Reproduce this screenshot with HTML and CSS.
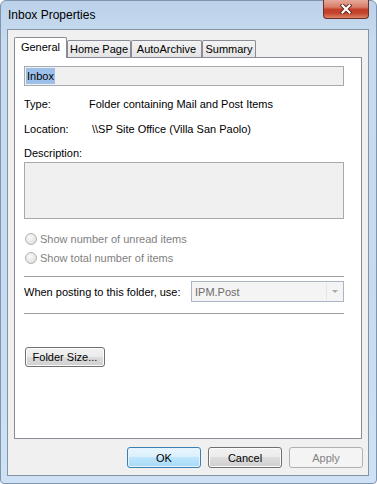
FILE: index.html
```html
<!DOCTYPE html>
<html lang="en">
<head>
    <meta charset="UTF-8">
    <meta name="viewport" content="width=device-width, initial-scale=1.0">
    <title>Inbox Properties</title>
    <link rel="stylesheet" href="styles.css">
</head>
<body>
    <div class="window">
        <div class="titlebar">
            <span class="title">Inbox Properties</span>
            <div class="close-btn">
                <svg width="12" height="10" viewBox="0 0 12 10">
                    <path d="M2.5 1.5 L9.5 8.5 M9.5 1.5 L2.5 8.5" stroke="#5a2218" stroke-width="4" stroke-linecap="square"/>
                    <path d="M2.5 1.5 L9.5 8.5 M9.5 1.5 L2.5 8.5" stroke="#ffffff" stroke-width="2.2" stroke-linecap="square"/>
                </svg>
            </div>
        </div>

        <div class="client">
            <div class="tabs">
                <div class="tab selected tab-general">General</div>
                <div class="tab tab-home">Home Page</div>
                <div class="tab tab-auto">AutoArchive</div>
                <div class="tab tab-summary">Summary</div>
            </div>

            <div class="panel">
                <div class="name-box"><span class="selection">Inbox</span></div>

                <div class="info-row row-type">
                    <span class="info-label">Type:</span>
                    <span>Folder containing Mail and Post Items</span>
                </div>
                <div class="info-row row-location">
                    <span class="info-label">Location:</span>
                    <span class="location-value">\\SP Site Office (Villa San Paolo)</span>
                </div>
                <div class="info-row row-desc">
                    <span>Description:</span>
                </div>
                <div class="desc-box"></div>

                <div class="radio-row radio-first">
                    <span class="radio"></span>
                    <span>Show number of unread items</span>
                </div>
                <div class="radio-row radio-second">
                    <span class="radio"></span>
                    <span>Show total number of items</span>
                </div>

                <div class="separator sep-first"></div>

                <div class="post-row">
                    <span>When posting to this folder, use:</span>
                    <div class="combo">
                        <span class="combo-text">IPM.Post</span>
                        <span class="combo-arrow"><span class="arrow"></span></span>
                    </div>
                </div>

                <div class="separator sep-second"></div>

                <button class="btn folder-size">Folder Size...</button>
            </div>

            <div class="footer">
                <button class="btn btn-default">OK</button>
                <button class="btn">Cancel</button>
                <button class="btn btn-disabled">Apply</button>
            </div>
        </div>
    </div>
</body>
</html>
```

FILE: styles.css
```css
body {
    margin: 0;
    font-family: "Liberation Sans", Arial, sans-serif;
    font-size: 11px;
    color: #000;
    overflow: hidden;
}
.window {
    width: 377px;
    height: 484px;
    box-sizing: border-box;
    display: flex;
    flex-direction: column;
    padding: 0 7px 7px 6px;
    background: linear-gradient(to bottom, #bcd2ea 0, #c8dbef 40px, #c6dbf1 60%, #cfe2f5 100%);
    border: 1px solid #7f95ad;
    border-radius: 6px 6px 4px 4px;
}
.titlebar {
    height: 28px;
    display: flex;
    align-items: center;
}
.title {
    padding-left: 1px;
    font-size: 12px;
}
.close-btn {
    margin-left: auto;
    align-self: flex-start;
    margin-top: -1px;
    width: 46px;
    height: 19px;
    box-sizing: border-box;
    border: 1px solid #6e3127;
    border-top: none;
    border-radius: 0 0 4px 4px;
    background: linear-gradient(to bottom, #e6a999 0%, #d77c68 40%, #c3412a 52%, #c2432b 72%, #dd8466 100%);
    display: flex;
    justify-content: center;
    align-items: center;
}
.client {
    flex: 1;
    display: flex;
    flex-direction: column;
    background: #f0f0f0;
    border: 1px solid #8593a3;
    padding: 7px 6px 0 6px;
}
.tabs {
    display: flex;
    align-items: flex-end;
    height: 20px;
}
.tab {
    box-sizing: border-box;
    height: 17px;
    border: 1px solid #898c95;
    border-bottom: none;
    border-radius: 2px 2px 0 0;
    background: linear-gradient(to bottom, #f3f3f3, #e4e4e4);
    display: flex;
    justify-content: center;
    align-items: center;
    white-space: nowrap;
}
.tab.selected {
    height: 21px;
    margin-bottom: -1px;
    background: #fff;
    position: relative;
    z-index: 1;
    padding-bottom: 2px;
}
.tab-general { width: 53px; }
.tab-home { width: 64px; }
.tab-auto { width: 71px; }
.tab-summary { width: 54px; }
.panel {
    flex: 1;
    background: #fff;
    border: 1px solid #898c95;
    padding: 8px 17px 0 9px;
    display: flex;
    flex-direction: column;
    align-items: flex-start;
}
.name-box {
    box-sizing: border-box;
    width: 320px;
    height: 20px;
    border: 1px solid #a5a9b0;
    background: #f0f0f0;
    padding-left: 1px;
    display: flex;
    align-items: center;
}
.selection {
    background: #9dc0ea;
    padding: 0 1px;
    line-height: 16px;
}
.info-row {
    height: 15px;
    display: flex;
    align-items: center;
    margin-top: 10px;
}
.info-label {
    width: 65px;
}
.location-value {
    padding-left: 3px;
}
.row-desc {
    margin-top: 9px;
}
.desc-box {
    box-sizing: border-box;
    width: 320px;
    height: 57px;
    margin-top: 2px;
    border: 1px solid #a5a9b0;
    background: #f0f0f0;
}
.radio-row {
    height: 17px;
    display: flex;
    align-items: center;
    color: #7f7f7f;
}
.radio-first { margin-top: 11px; }
.radio-second { margin-top: 2px; }
.radio {
    box-sizing: border-box;
    width: 12px;
    height: 12px;
    margin: 0 3px 0 1px;
    border: 1px solid #b4b4b4;
    border-radius: 50%;
    background: radial-gradient(circle at 40% 35%, #fafafa 0, #e6e6e6 60%, #d6d6d6 100%);
}
.separator {
    width: 320px;
    height: 1px;
    background: #a0a0a0;
}
.sep-first { margin-top: 10px; }
.sep-second { margin-top: 11px; }
.post-row {
    width: 320px;
    height: 21px;
    margin-top: 4px;
    display: flex;
    align-items: center;
}
.combo {
    margin-left: auto;
    box-sizing: border-box;
    width: 153px;
    height: 21px;
    border: 1px solid #a7b5c6;
    background: #f4f4f4;
    display: flex;
    align-items: center;
}
.combo-text {
    padding-left: 3px;
    color: #6d6d6d;
}
.combo-arrow {
    margin-left: auto;
    width: 15px;
    height: 17px;
    margin-right: 1px;
    border-left: 1px solid #e2e5e9;
    display: flex;
    justify-content: center;
    align-items: center;
}
.arrow {
    width: 0;
    height: 0;
    border-left: 3px solid transparent;
    border-right: 3px solid transparent;
    border-top: 3px solid #a2a8af;
}
.btn {
    box-sizing: border-box;
    width: 74px;
    height: 21px;
    padding: 0;
    border: 1px solid #707070;
    border-radius: 3px;
    background: linear-gradient(to bottom, #f2f2f2 0%, #ebebeb 50%, #dddddd 50%, #cfcfcf 100%);
    box-shadow: inset 0 0 0 1px #fbfbfb;
    font-family: "Liberation Sans", Arial, sans-serif;
    font-size: 11px;
    color: #000;
}
.folder-size {
    width: 80px;
    height: 20px;
    margin: 33px 0 0 1px;
}
.footer {
    height: 36px;
    box-sizing: border-box;
    padding-top: 8px;
    margin-right: -1px;
    display: flex;
    justify-content: flex-end;
    align-items: flex-start;
    gap: 7px;
}
.btn-default {
    border-color: #3c7fb1;
    background: linear-gradient(to bottom, #eaf6fd 0%, #d9f0fc 50%, #bee6fd 50%, #a7d9f5 100%);
    box-shadow: inset 0 0 0 1px #e5f4fc;
}
.btn-disabled {
    border-color: #adb2b5;
    background: #f4f4f4;
    box-shadow: none;
    color: #838383;
}
```
